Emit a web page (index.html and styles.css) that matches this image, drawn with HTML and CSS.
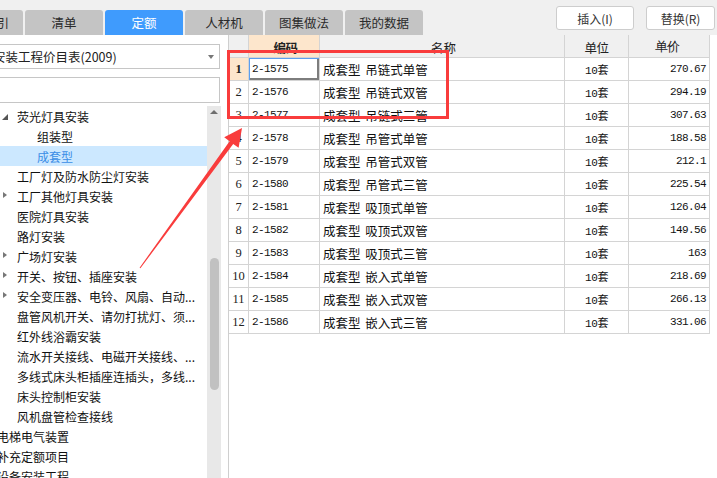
FILE: index.html
```html
<!DOCTYPE html>
<html lang="zh">
<head>
<meta charset="utf-8">
<title>定额</title>
<link rel="stylesheet" href="styles.css">
</head>
<body>
<div class="app">
  <div class="topbar">
    <div class="tabs">
      <div class="tab tab-cut">索引</div>
      <div class="tab">清单</div>
      <div class="tab active">定额</div>
      <div class="tab">人材机</div>
      <div class="tab">图集做法</div>
      <div class="tab">我的数据</div>
    </div>
    <div class="actions">
      <button class="btn">插入(I)</button>
      <button class="btn btn-narrow">替换(R)</button>
    </div>
  </div>
  <div class="main">
    <aside class="side">
      <div class="combo"><span class="combo-text">安装工程价目表(2009)</span><span class="combo-arrow"></span></div>
      <div class="search"></div>
      <div class="tree-wrap">
        <div class="tree">
          <div class="node l1"><span class="tw open"></span><span>荧光灯具安装</span></div>
          <div class="node l2"><span class="tw"></span><span>组装型</span></div>
          <div class="node l2 sel"><span class="tw"></span><span>成套型</span></div>
          <div class="node l1"><span class="tw"></span><span>工厂灯及防水防尘灯安装</span></div>
          <div class="node l1"><span class="tw closed"></span><span>工厂其他灯具安装</span></div>
          <div class="node l1"><span class="tw"></span><span>医院灯具安装</span></div>
          <div class="node l1"><span class="tw"></span><span>路灯安装</span></div>
          <div class="node l1"><span class="tw closed"></span><span>广场灯安装</span></div>
          <div class="node l1"><span class="tw closed"></span><span>开关、按钮、插座安装</span></div>
          <div class="node l1"><span class="tw closed"></span><span>安全变压器、电铃、风扇、自动...</span></div>
          <div class="node l1"><span class="tw"></span><span>盘管风机开关、请勿打扰灯、须...</span></div>
          <div class="node l1"><span class="tw"></span><span>红外线浴霸安装</span></div>
          <div class="node l1"><span class="tw"></span><span>流水开关接线、电磁开关接线、...</span></div>
          <div class="node l1"><span class="tw"></span><span>多线式床头柜插座连插头，多线...</span></div>
          <div class="node l1"><span class="tw"></span><span>床头控制柜安装</span></div>
          <div class="node l1"><span class="tw"></span><span>风机盘管检查接线</span></div>
          <div class="node l0"><span class="tw"></span><span>电梯电气装置</span></div>
          <div class="node l0"><span class="tw"></span><span>补充定额项目</span></div>
          <div class="node l0"><span class="tw"></span><span>设备安装工程</span></div>
        </div>
        <div class="vscroll"><span class="up"></span><span class="thumb"></span></div>
      </div>
    </aside>
    <section class="grid">
      <div class="row head">
        <div class="c num"></div>
        <div class="c code hl">编码</div>
        <div class="c name ctr">名称</div>
        <div class="c unit">单位</div>
        <div class="c price ctr">单价</div>
      </div>
      <div class="row"><div class="c num cur">1</div><div class="c code focus">2-1575</div><div class="c name">成套型 吊链式单管</div><div class="c unit">10套</div><div class="c price">270.67</div></div>
      <div class="row"><div class="c num">2</div><div class="c code">2-1576</div><div class="c name">成套型 吊链式双管</div><div class="c unit">10套</div><div class="c price">294.19</div></div>
      <div class="row"><div class="c num">3</div><div class="c code">2-1577</div><div class="c name">成套型 吊链式三管</div><div class="c unit">10套</div><div class="c price">307.63</div></div>
      <div class="row"><div class="c num">4</div><div class="c code">2-1578</div><div class="c name">成套型 吊管式单管</div><div class="c unit">10套</div><div class="c price">188.58</div></div>
      <div class="row"><div class="c num">5</div><div class="c code">2-1579</div><div class="c name">成套型 吊管式双管</div><div class="c unit">10套</div><div class="c price">212.1</div></div>
      <div class="row"><div class="c num">6</div><div class="c code">2-1580</div><div class="c name">成套型 吊管式三管</div><div class="c unit">10套</div><div class="c price">225.54</div></div>
      <div class="row"><div class="c num">7</div><div class="c code">2-1581</div><div class="c name">成套型 吸顶式单管</div><div class="c unit">10套</div><div class="c price">126.04</div></div>
      <div class="row"><div class="c num">8</div><div class="c code">2-1582</div><div class="c name">成套型 吸顶式双管</div><div class="c unit">10套</div><div class="c price">149.56</div></div>
      <div class="row"><div class="c num">9</div><div class="c code">2-1583</div><div class="c name">成套型 吸顶式三管</div><div class="c unit">10套</div><div class="c price">163</div></div>
      <div class="row"><div class="c num">10</div><div class="c code">2-1584</div><div class="c name">成套型 嵌入式单管</div><div class="c unit">10套</div><div class="c price">218.69</div></div>
      <div class="row"><div class="c num">11</div><div class="c code">2-1585</div><div class="c name">成套型 嵌入式双管</div><div class="c unit">10套</div><div class="c price">266.13</div></div>
      <div class="row"><div class="c num">12</div><div class="c code">2-1586</div><div class="c name">成套型 嵌入式三管</div><div class="c unit">10套</div><div class="c price">331.06</div></div>
    </section>
  </div>
  <div class="mark-rect"></div>
  <svg class="mark-arrow" width="717" height="478" viewBox="0 0 717 478">
    <polygon points="140.4,268.3 233.2,143.9 238.6,147.8 242,128 224.2,137.3 229.6,141.3 139.6,267.7" fill="#f93c3c"/>
  </svg>
</div>
</body>
</html>
```
FILE: styles.css
```css
* { box-sizing: border-box; }
html, body { margin: 0; padding: 0; }
body {
  width: 717px;
  height: 478px;
  overflow: hidden;
  font-family: "Noto Sans CJK SC", "Liberation Sans", sans-serif;
  font-size: 12px;
  color: #111;
  background: #f0f0f0;
}
.app { position: relative; width: 717px; height: 478px; overflow: hidden; }

/* top bar */
.topbar { height: 35px; display: flex; background: #f0f0f0; }
.tabs { display: flex; gap: 2px; padding-top: 10px; }
.tab {
  width: 78px; height: 25px;
  background: #c4c4c4;
  border-radius: 3px 3px 0 0;
  display: flex; align-items: center; justify-content: center;
  font-size: 12.5px; color: #2b2b2b;
  flex: none;
}
.tab-cut { margin-left: -55px; justify-content: flex-end; padding-right: 14px; }
.tab.active { background: #3f9bfd; color: #fff; }
.actions { margin-left: auto; display: flex; gap: 12px; padding-top: 6px; padding-right: 2px; align-items: flex-start; }
.btn {
  width: 78px; height: 24px;
  background: #fff;
  border: 1px solid #cdcdcd;
  border-radius: 3px;
  font-family: "Noto Sans CJK SC", "Liberation Sans", sans-serif;
  font-size: 12px; color: #333;
  padding: 0;
}
.btn-narrow { width: 69px; }

/* main area */
.main { display: flex; height: 443px; }
.side { width: 228px; flex: none; background: #fff; display: flex; flex-direction: column; overflow: hidden; }
.combo {
  flex: none;
  margin: 9px 8px 0 -10px;
  height: 25px;
  border: 1px solid #c6c6c6;
  background: #fff;
  display: flex; align-items: center;
  padding-left: 2px;
  position: relative;
  font-size: 12.5px; color: #222;
  white-space: nowrap;
}
.combo-arrow {
  position: absolute; right: 5px; top: 10px;
  border-left: 3px solid transparent; border-right: 3px solid transparent;
  border-top: 4px solid #777;
}
.search { flex: none; margin: 8px 8px 0 -10px; height: 26px; border: 1px solid #c6c6c6; background: #fff; }
.tree-wrap { margin-top: 3px; flex: 1; min-height: 0; display: flex; overflow: hidden; }
.tree { width: 207px; flex: none; }
.node {
  height: 20px; display: flex; align-items: center;
  white-space: nowrap; font-size: 12px; color: #111;
}
.node.l0 { margin-left: -20px; }
.node.l2 { padding-left: 20px; }
.node.sel { background: #cce8ff; color: #3a8de6; }
.tw { width: 17px; flex: none; height: 20px; position: relative; }
.tw.open::before {
  content: ""; position: absolute; left: 2px; top: 8px;
  border-left: 6px solid transparent; border-bottom: 6px solid #555;
}
.tw.closed::before {
  content: ""; position: absolute; left: 3px; top: 6px;
  border-top: 3.5px solid transparent; border-bottom: 3.5px solid transparent;
  border-left: 4px solid #777;
}
.vscroll { width: 14px; flex: none; background: #e8e8e8; position: relative; }
.vscroll .up {
  position: absolute; left: 3px; top: 4px;
  border-left: 4px solid transparent; border-right: 4px solid transparent;
  border-bottom: 4px solid #6e6e6e;
}
.vscroll .thumb {
  position: absolute; left: 3px; top: 152px; width: 9px; height: 132px;
  background: #c1c1c1; border-radius: 5px;
}

/* grid */
.grid { flex: 1; background: #fff; border-left: 1px solid #cfcfcf; }
.row { display: grid; grid-template-columns: 20px 71px 245px 64px 81px; height: 23px; }
.c {
  border-right: 1px solid #d4d4d4; border-bottom: 1px solid #d4d4d4;
  display: flex; align-items: center;
  white-space: nowrap; overflow: hidden;
}
.head .c { background: #f0f0f0; justify-content: center; font-size: 12.5px; color: #222; padding-top: 2px; }
.head .c.hl { background: #fde6cc; font-weight: bold; }
.num { justify-content: center; font-family: "Liberation Serif", serif; font-size: 12.5px; color: #222; }
.num.cur { background: #fde6cc; font-weight: bold; }
.code {
  padding-left: 3px;
  font-family: "Liberation Mono", "Noto Sans CJK SC", monospace;
  font-size: 11px; letter-spacing: -0.6px;
}
.code.focus { box-shadow: inset 1px 1px 0 #5b9ff0, inset -2px -2px 0 #7d7d7d; }
.name { padding-left: 3px; font-size: 12.5px; word-spacing: 2px; }
.unit {
  justify-content: center;
  font-family: "Liberation Mono", "Noto Sans CJK SC", monospace;
  font-size: 11px; letter-spacing: -0.4px;
}
.price {
  justify-content: flex-end; padding-right: 3px;
  font-family: "Liberation Mono", monospace;
  font-size: 11px; letter-spacing: -0.6px;
}

/* annotations */
.mark-rect {
  position: absolute; left: 227px; top: 50px; width: 222px; height: 69px;
  border: 3px solid #f93c3c;
}
.mark-arrow { position: absolute; left: 0; top: 0; pointer-events: none; }
```
